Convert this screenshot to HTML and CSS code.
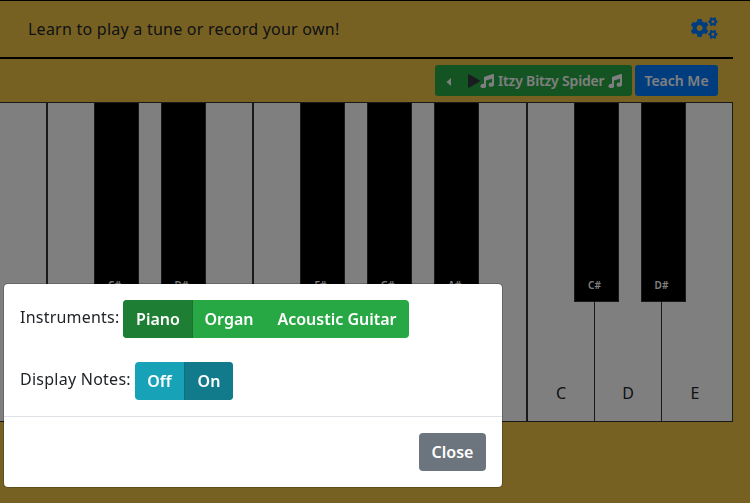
FILE: index.html
```
<!DOCTYPE html>
<html lang="en">
<head>
<meta charset="utf-8">
<title>Piano</title>
<link rel="stylesheet" href="styles.css">
</head>
<body>
<svg width="0" height="0" class="defs">
  <symbol id="music" viewBox="0 0 14 14">
    <path d="M4 2.9 12.7.1Q14 -.2 14 1V10.5A2.7 2.1 0 1 1 12 8.7V4.7L6 6.6V11.9A2.8 2.1 0 1 1 4 10Z" fill="currentColor"/>
  </symbol>
  <symbol id="cog" viewBox="-112 -112 224 224">
    <path transform="translate(-528 -106)" fill="currentColor" d="M512.1 191l-8.2 14.3c-3 5.3-9.4 7.5-15.1 5.4-11.8-4.4-22.6-10.7-32.1-18.6-4.6-3.8-5.8-10.5-2.8-15.7l8.2-14.3c-6.9-8-12.3-17.3-15.9-27.4h-16.5c-6 0-11.2-4.3-12.2-10.3-2-12-2.1-24.6 0-37.1 1-6 6.2-10.4 12.2-10.4h16.5c3.6-10.1 9-19.4 15.9-27.4l-8.2-14.3c-3-5.2-1.9-11.9 2.8-15.7 9.5-7.9 20.4-14.2 32.1-18.6 5.7-2.1 12.1.1 15.1 5.4l8.2 14.3c10.5-1.9 21.2-1.9 31.7 0L552 6.3c3-5.3 9.4-7.5 15.1-5.4 11.8 4.4 22.6 10.7 32.1 18.6 4.6 3.8 5.8 10.5 2.8 15.7l-8.2 14.3c6.9 8 12.3 17.3 15.9 27.4h16.5c6 0 11.2 4.3 12.2 10.3 2 12 2.1 24.6 0 37.1-1 6-6.2 10.4-12.2 10.4h-16.5c-3.6 10.1-9 19.4-15.9 27.4l8.2 14.3c3 5.2 1.9 11.9-2.8 15.7-9.5 7.9-20.4 14.2-32.1 18.6-5.7 2.1-12.1-.1-15.1-5.4l-8.2-14.3c-10.4 1.9-21.2 1.9-31.7 0zm-10.5-58.8c38.5 29.6 82.4-14.3 52.8-52.8-38.5-29.7-82.4 14.3-52.8 52.8z"/>
  </symbol>
</svg>
<div class="page">
  <header class="header">
    <span>Learn to play a tune or record your own!</span>
    <svg class="gears" viewBox="0 0 640 512">
      <g transform="translate(204 256) rotate(30)"><use href="#cog" x="-215" y="-215" width="430" height="430"/></g>
      <use href="#cog" x="408" y="-6" width="224" height="224"/>
      <use href="#cog" x="408" y="294" width="224" height="224"/>
    </svg>
  </header>
  <div class="toolbar">
    <div class="btn-sm song">
      <svg class="caret" viewBox="0 0 5 8"><path d="M5 0V8L.5 4Z" fill="currentColor"/></svg>
      <svg class="play" viewBox="0 0 12 14"><path d="M0 .8Q.1 0 1 .3L11.5 6.3Q12.2 7 11.5 7.7L1 13.7Q.1 14 0 13.2Z" fill="currentColor"/></svg>
      <svg class="note"><use href="#music"/></svg>
      <span class="title">Itzy Bitzy Spider</span>
      <svg class="note"><use href="#music"/></svg>
    </div>
    <div class="btn-sm teach">Teach Me</div>
  </div>
  <div class="piano">
    <div class="key last"></div>
    <div class="key"><div class="black">C#</div></div>
    <div class="key"><div class="black">D#</div></div>
    <div class="key last"></div>
    <div class="key"><div class="black">F#</div></div>
    <div class="key"><div class="black">G#</div></div>
    <div class="key"><div class="black">A#</div></div>
    <div class="key last wide"></div>
    <div class="key">C<div class="black">C#</div></div>
    <div class="key">D<div class="black">D#</div></div>
    <div class="key last">E</div>
  </div>
</div>
<div class="backdrop"></div>
<div class="modal">
  <div class="body">
    <div class="row">
      <span class="label">Instruments:</span>
      <div class="group green"><span class="btn active piano-btn">Piano</span><span class="btn organ">Organ</span><span class="btn guitar">Acoustic Guitar</span></div>
    </div>
    <div class="row">
      <span class="label notes">Display Notes:</span>
      <div class="group teal"><span class="btn toggle">Off</span><span class="btn toggle active">On</span></div>
    </div>
  </div>
  <div class="footer"><span class="btn close">Close</span></div>
</div>
</body>
</html>
```
FILE: styles.css
```
* { box-sizing: border-box; }
body {
  margin: 0;
  height: 503px;
  overflow: hidden;
  background: #eec244;
  border-top: 1px solid #000;
  color: #212529;
  font: 16px/24px "Noto Sans", sans-serif;
}
.defs { position: absolute; }
.page { width: 733px; }
.header {
  height: 58px;
  padding: 0 15px 0 28px;
  border-bottom: 2px solid #000;
  display: flex;
  align-items: center;
  justify-content: space-between;
  letter-spacing: .24px;
}
.gears { width: 27px; height: 22px; margin-top: -2px; color: #007bff; overflow: visible; }
.toolbar {
  height: 43px;
  padding: 6px 15px 0 0;
  display: flex;
  justify-content: flex-end;
  gap: 3px;
}
.btn-sm {
  height: 31px;
  border-radius: 3px;
  color: #fff;
  font-size: 14px;
  font-weight: 600;
  display: flex;
  align-items: center;
  white-space: nowrap;
}
.song { width: 197px; padding-left: 11px; background: #28a745; }
.teach { width: 83px; justify-content: center; background: #007bff; }
.caret { width: 5px; height: 8px; margin: 2px 17px 0 0; }
.play { width: 12px; height: 14px; color: #343a40; }
.note { width: 14px; height: 14px; overflow: visible; }
.title { width: 107px; margin: 0 3px 0 4px; letter-spacing: -.17px; }
.piano {
  width: 759px;
  height: 320px;
  margin-left: -25px;
  display: flex;
}
.key {
  position: relative;
  flex: none;
  width: 67px;
  padding-top: 278px;
  border: solid #333;
  border-width: 1px 0 1px 1px;
  background: #fff;
  text-align: center;
}
.key.last { width: 72px; padding-right: 4px; border-right-width: 1px; }
.key.wide { width: 73px; }
.black {
  position: absolute;
  z-index: 1;
  left: 46px;
  top: -1px;
  width: 45px;
  height: 200px;
  padding: 172px 4px 0 0;
  border: 1px solid #333;
  background: #000;
  color: #fff;
  font-size: 10px;
  line-height: 20px;
  font-weight: 600;
}
.backdrop { position: fixed; z-index: 2; inset: 0; background: rgba(0, 0, 0, .5); }
.modal {
  position: fixed;
  z-index: 3;
  left: 3px;
  top: 283px;
  width: 500px;
  border: 1px solid rgba(0, 0, 0, .2);
  border-radius: 5px;
  background: #fff;
  background-clip: padding-box;
}
.body { padding: 16px; display: grid; gap: 24px; }
.row { display: flex; height: 38px; }
.label { width: 103px; padding-top: 5px; letter-spacing: .22px; white-space: nowrap; }
.notes { width: 115px; letter-spacing: .25px; }
.group { display: flex; border-radius: 4px; overflow: hidden; }
.btn {
  height: 38px;
  color: #fff;
  font-weight: 600;
  line-height: 38px;
  text-align: center;
  white-space: nowrap;
}
.green { background: #28a745; }
.teal { background: #17a2b8; }
.green .active { background: #1e7e34; border-right: 1px solid #1c7430; }
.teal .active { background: #117a8b; border-left: 1px solid #10707f; }
.piano-btn { width: 70px; padding-left: 1px; }
.organ { width: 72px; }
.guitar { width: 144px; }
.toggle { width: 49px; }
.footer {
  height: 71px;
  padding: 16px;
  border-top: 1px solid #dee2e6;
  display: flex;
  justify-content: flex-end;
}
.close { width: 67px; border-radius: 4px; background: #6c757d; }
```
